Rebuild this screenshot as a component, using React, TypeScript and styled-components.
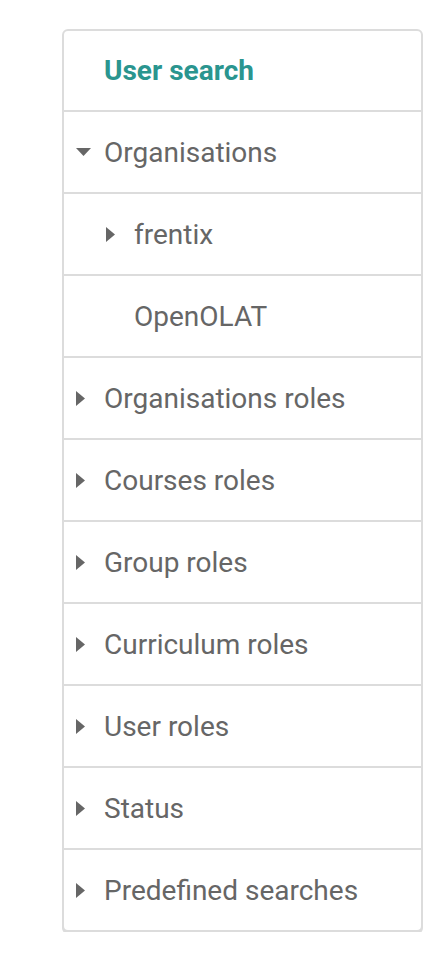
import React from "react";
import styled, { createGlobalStyle } from "styled-components";

const GlobalStyle = createGlobalStyle`
  html, body {
    margin: 0;
    padding: 0;
    background: #fff;
  }
  body {
    font-family: Roboto, "Liberation Sans", Arial, sans-serif;
  }
`;

const Panel = styled.nav`
  width: 361px;
  margin: 29px 0 0 62px;
  box-sizing: border-box;
  border: 2px solid #dcdcdc;
  border-radius: 6px;
  box-shadow: 0 2px 0 #dcdcdc;
  background: #fff;
`;

const Header = styled.div`
  height: 79px;
  display: flex;
  align-items: center;
  padding-left: 40px;
  color: #2a958f;
  font-size: 28px;
  font-weight: 700;
`;

const Row = styled.div<{ $level: number }>`
  height: 80px;
  border-top: 2px solid #dcdcdc;
  display: flex;
  align-items: center;
  padding-left: ${(p) => 12 + p.$level * 30}px;
  color: #666;
  font-size: 28px;
`;

const Caret = styled.span`
  width: 28px;
  display: flex;
  align-items: center;
  justify-content: flex-start;
  flex-shrink: 0;
`;

const Label = styled.span`
  white-space: nowrap;
`;

type State = "open" | "closed" | "leaf";

interface IItem {
  label: string;
  level: number;
  state: State;
}

const items: IItem[] = [
  { label: "Organisations", level: 0, state: "open" },
  { label: "frentix", level: 1, state: "closed" },
  { label: "OpenOLAT", level: 1, state: "leaf" },
  { label: "Organisations roles", level: 0, state: "closed" },
  { label: "Courses roles", level: 0, state: "closed" },
  { label: "Group roles", level: 0, state: "closed" },
  { label: "Curriculum roles", level: 0, state: "closed" },
  { label: "User roles", level: 0, state: "closed" },
  { label: "Status", level: 0, state: "closed" },
  { label: "Predefined searches", level: 0, state: "closed" },
];

const CaretIcon: React.FC<{ state: State }> = ({ state }) => {
  if (state === "leaf") return null;
  if (state === "open") {
    return (
      <svg width="15" height="8" viewBox="0 0 15 8">
        <path d="M0 0 L15 0 L7.5 8 Z" fill="#666" />
      </svg>
    );
  }
  return (
    <svg width="9" height="15" viewBox="0 0 9 15">
      <path d="M0 0 L9 7.5 L0 15 Z" fill="#666" />
    </svg>
  );
};

export default function App() {
  return (
    <>
      <GlobalStyle />
      <Panel>
        <Header>User search</Header>
        {items.map((item) => (
          <Row key={item.label} $level={item.level}>
            <Caret>
              <CaretIcon state={item.state} />
            </Caret>
            <Label>{item.label}</Label>
          </Row>
        ))}
      </Panel>
    </>
  );
}
